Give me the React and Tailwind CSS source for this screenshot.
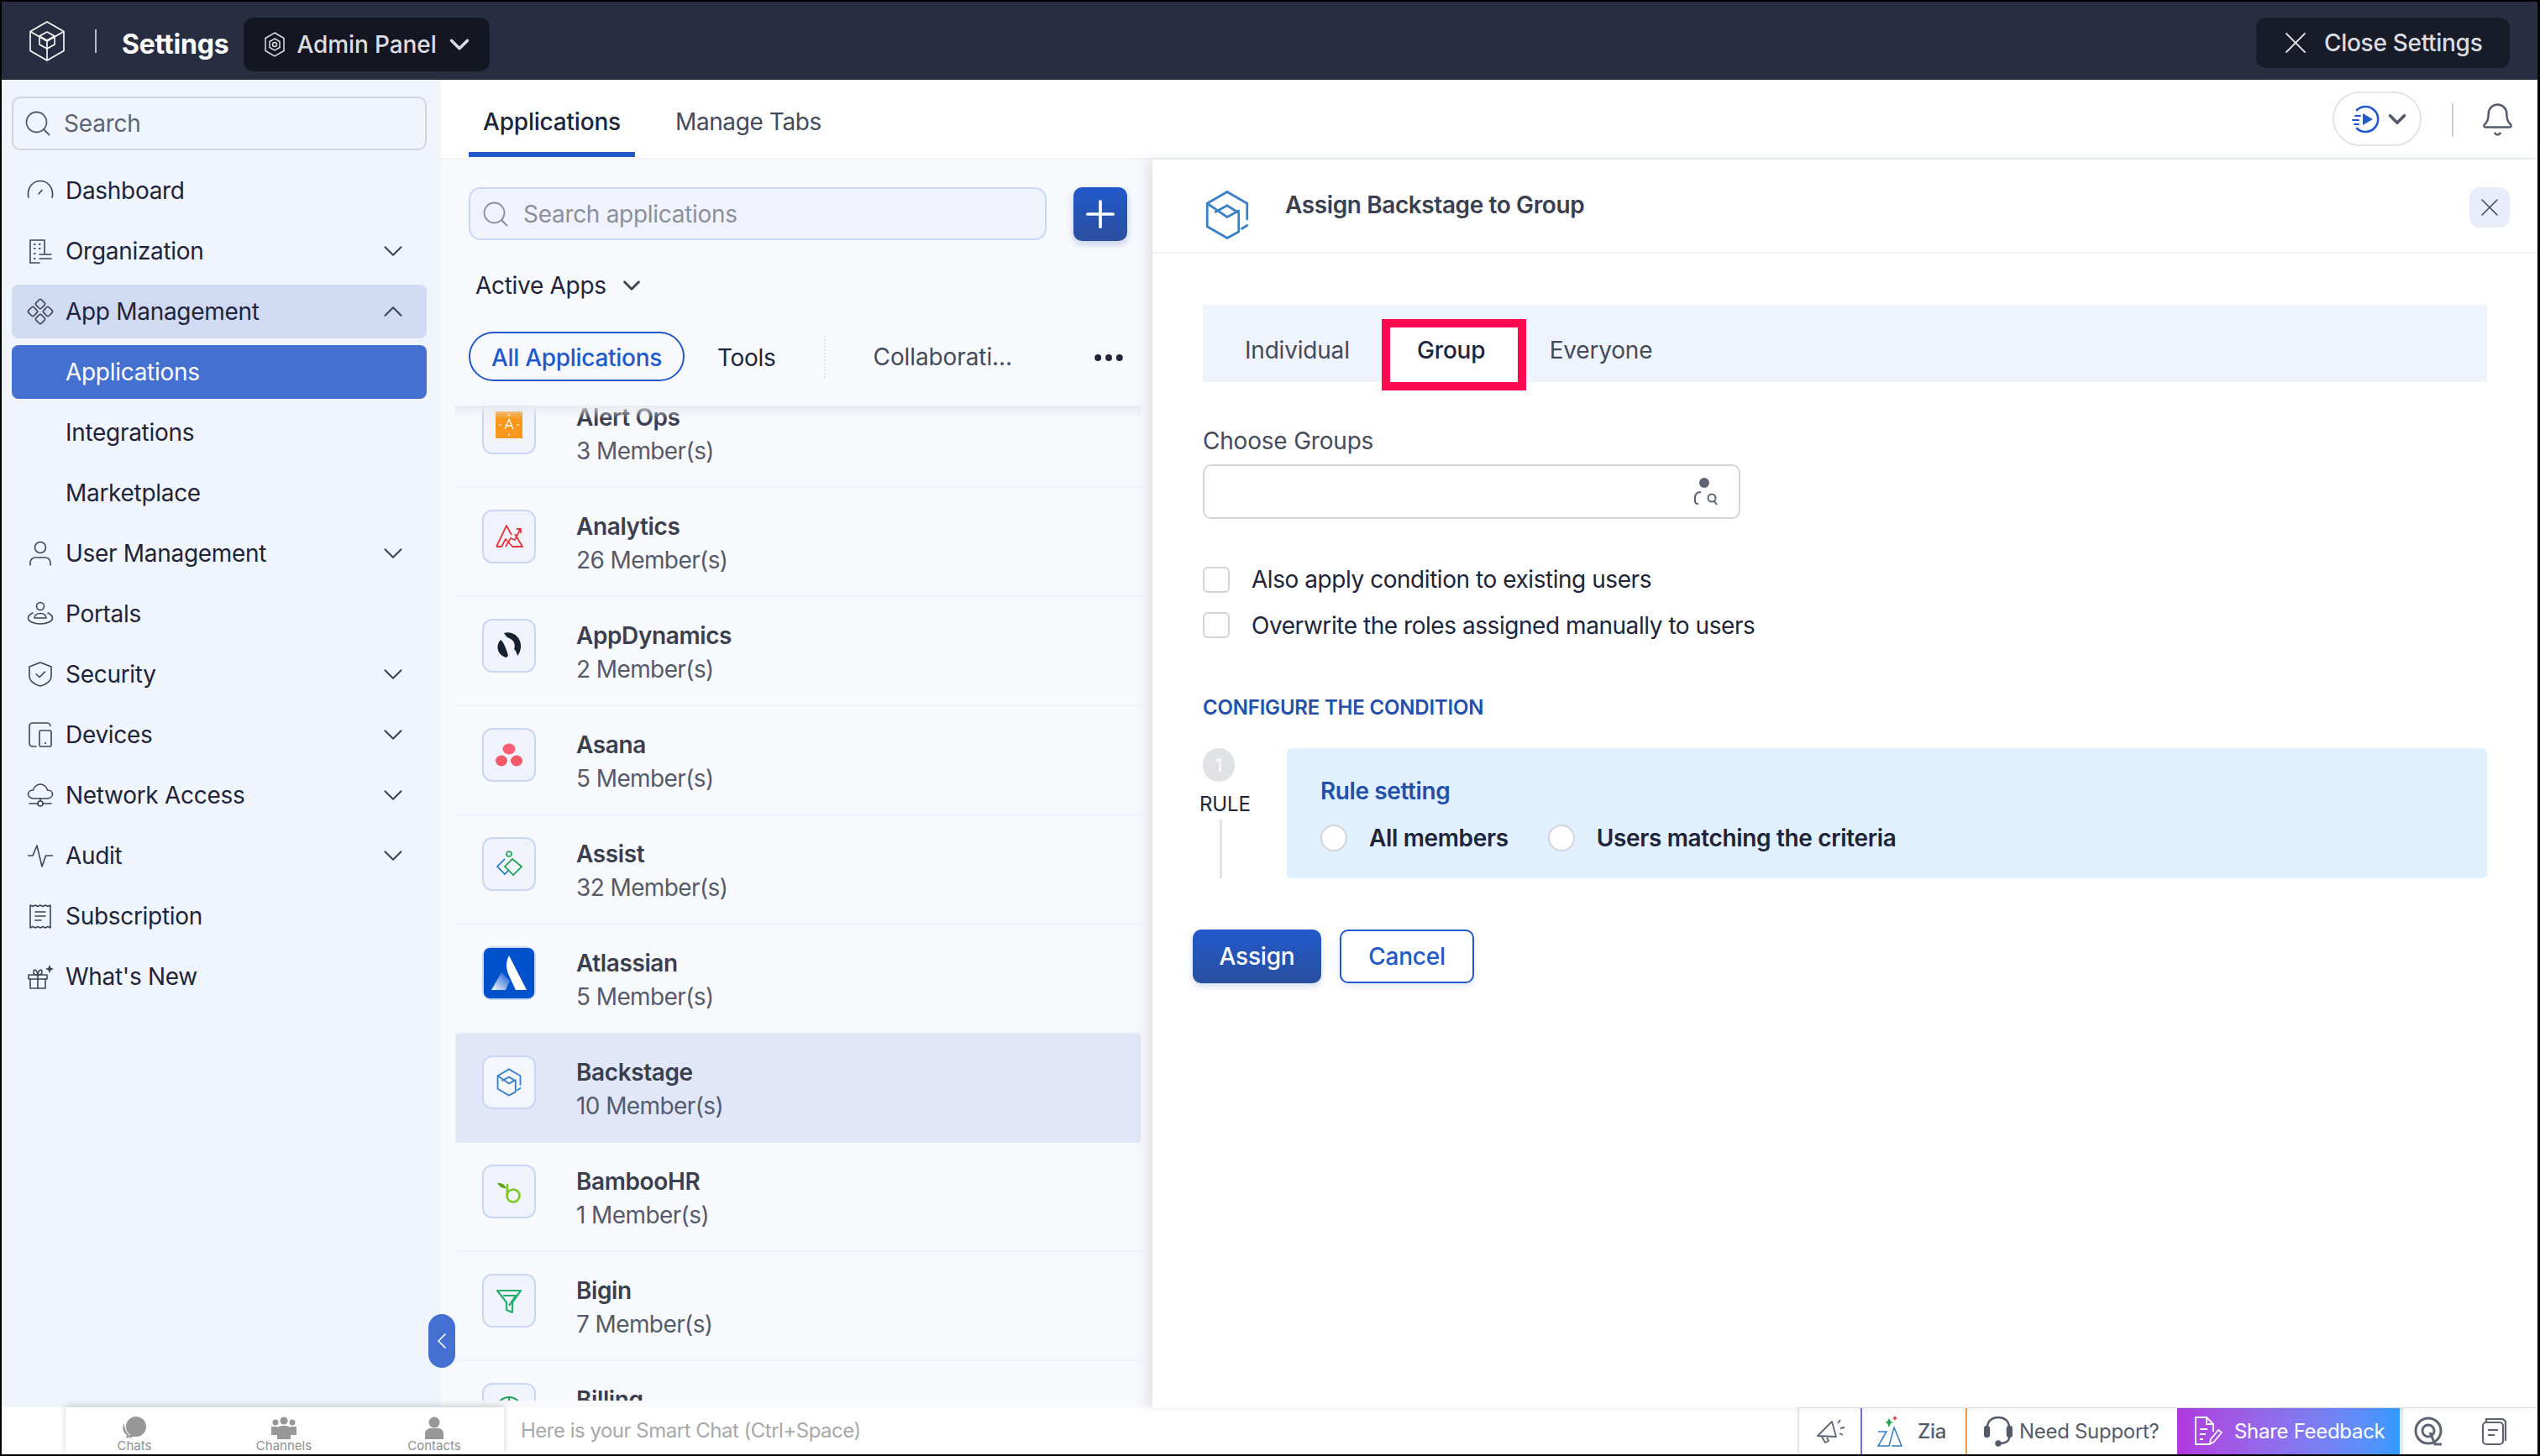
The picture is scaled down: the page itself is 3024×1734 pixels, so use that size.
import React from "react";
import { Search, ChevronDown, ChevronUp, ChevronLeft, X, Plus, Bell, MoreHorizontal } from "lucide-react";

const stroke = { fill: "none", stroke: "currentColor", strokeWidth: 1.6, strokeLinecap: "round", strokeLinejoin: "round" };

function Ico({ size = 32, vb = 32, className = "", children }) {
  return (
    <svg width={size} height={size} viewBox={`0 0 ${vb} ${vb}`} className={`shrink-0 ${className}`} {...stroke}>
      {children}
    </svg>
  );
}

const navIcons = {
  dash: (
    <Ico>
      <path d="M2 28c-.4-1-.6-2.300-.6-3.500C1.400 15 8 8.500 16 8.500S30.600 15 30.600 24.500c0 1.200-.2 2.500-.6 3.500" transform="translate(0 -4)" />
      <path d="M14 20l4-4.500" />
    </Ico>
  ),
  org: (
    <Ico>
      <path d="M4 30V3h17v16" />
      <path d="M4 30h11" />
      <path d="M9 8h.5M15 8h.5M9 13h.5M15 13h.5M9 19h.5M9 25h.5" strokeWidth="2.200" />
      <path d="M15 20h14M15 25h14" />
    </Ico>
  ),
  app: (
    <Ico>
      <rect x="11.500" y="2.500" width="9" height="9" rx="2" transform="rotate(45 16 7)" />
      <rect x="11.500" y="20.500" width="9" height="9" rx="2" transform="rotate(45 16 25)" />
      <rect x="2.500" y="11.500" width="9" height="9" rx="2" transform="rotate(45 7 16)" />
      <rect x="20.500" y="11.500" width="9" height="9" rx="2" transform="rotate(45 25 16)" />
    </Ico>
  ),
  user: (
    <Ico>
      <circle cx="16" cy="9" r="6.500" />
      <path d="M4 30v-3c0-3.500 3-6 6-6h12c3 0 6 2.500 6 6v3" />
    </Ico>
  ),
  portal: (
    <Ico>
      <circle cx="16" cy="7" r="4.500" />
      <path d="M9 21c0-3.500 3-5.500 7-5.500s7 2 7 5.500z" />
      <path d="M7 15c-3.500 1.500-5.500 3.500-5.500 6 0 4 6.500 7 14.500 7s14.500-3 14.500-7c0-2.500-2-4.500-5.500-6" />
    </Ico>
  ),
  shield: (
    <Ico>
      <path d="M16 2l13 5v11c0 6-6 10.500-13 12C9 28.500 3 24 3 18V7z" />
      <path d="M11 16l4 3.500 6.500-6.500" />
    </Ico>
  ),
  device: (
    <Ico>
      <path d="M11 30H7c-2.500 0-4-1.500-4-4V6c0-2.500 1.500-4 4-4h17c2 0 4 1.500 4 3.500" />
      <rect x="15" y="11" width="14" height="19" rx="1.500" />
      <path d="M22 26h.2" strokeWidth="2" />
    </Ico>
  ),
  network: (
    <Ico>
      <path d="M9 20c-4.500 0-7.500-2-7.500-5s2.500-5 6-5c1-4 4.500-7 8.500-7s7.500 3 8.500 7c3.500 0 6 2 6 5s-3 5-7.500 5z" />
      <path d="M3 26h10M19 26h10M16 20v3" />
      <circle cx="16" cy="26" r="3" />
    </Ico>
  ),
  audit: (
    <Ico>
      <path d="M1.500 16H7l5-12 6 25 4.500-13h8" />
    </Ico>
  ),
  sub: (
    <Ico>
      <path d="M4 3l3 1.500L10 3l3 1.500L16 3l3 1.500L22 3l3 1.500L28 3v27l-3-1.500L22 30l-3-1.500L16 30l-3-1.500L10 30l-3-1.500L4 30z" />
      <path d="M10 11h12M10 16h12M10 21h7" />
    </Ico>
  ),
  gift: (
    <Ico>
      <rect x="2" y="14" width="22" height="5" />
      <path d="M4 19v11h18V19M13 14v16M8 10c0-3 4-3 5 4-5 0-5-2-5-4zM18 10c0-3-4-3-5 4 5 0 5-2 5-4z" />
      <path d="M27 2l1.500 3.500L32 7l-3.500 1.500L27 12l-1.500-3.500L22 7l3.500-1.500z" fill="currentColor" stroke="none" />
    </Ico>
  ),
};

const navItems = [
  { name: "Dashboard", icon: "dash" },
  { name: "Organization", icon: "org", chev: "down" },
  { name: "App Management", icon: "app", chev: "up", open: true },
  { name: "Applications", active: true },
  { name: "Integrations" },
  { name: "Marketplace" },
  { name: "User Management", icon: "user", chev: "down" },
  { name: "Portals", icon: "portal" },
  { name: "Security", icon: "shield", chev: "down" },
  { name: "Devices", icon: "device", chev: "down" },
  { name: "Network Access", icon: "network", chev: "down" },
  { name: "Audit", icon: "audit", chev: "down" },
  { name: "Subscription", icon: "sub" },
  { name: "What's New", icon: "gift" },
];

function Hex({ size, className, width = 2 }) {
  return (
    <svg width={size} height={size} viewBox="0 0 48 48" className={`shrink-0 ${className}`} fill="none" stroke="currentColor" strokeWidth={width} strokeLinejoin="round" strokeLinecap="round">
      <path d="M24 2l19 11v15M38 37l5-3" />
      <path d="M24 2L5 13v22l19 11 11-6V22L24 15l-11 6" />
      <path d="M5 13l19 13 11-6" />
    </svg>
  );
}

const apps = [
  {
    name: "Alert Ops", members: "3 Member(s)",
    icon: (
      <svg width="32" height="32" viewBox="0 0 32 32" className="-mt-[6px]">
        <rect width="32" height="32" fill="#f7981d" />
        <path d="M16 9l-5 12M16 9l5 12M13 17h6" stroke="#fff" strokeWidth="1.300" fill="none" />
        <path d="M16 3v3M16 26v3M4 16h3M25 16h3" stroke="#fff" strokeWidth="1" />
      </svg>
    ),
  },
  {
    name: "Analytics", members: "26 Member(s)",
    icon: (
      <svg width="34" height="32" viewBox="0 0 34 32" fill="none" stroke="#e8353c" strokeWidth="1.800" strokeLinejoin="round">
        <path d="M2 28L14 3l6 11" />
        <path d="M2 28h6l5-9 8 9H33l-9-15" />
        <path d="M13 28l6-10 5 2 6-12M26 7l5 0 0 5" />
      </svg>
    ),
  },
  {
    name: "AppDynamics", members: "2 Member(s)",
    icon: (
      <svg width="32" height="32" viewBox="0 0 32 32" fill="#17202e">
        <path d="M10 1c9-3 19 3 20 14 .4 5-1 9-4 13-1-4-2-6-4-8 2-5 0-11-6-13-3-1-4-3-6-6z" />
        <path d="M6 9c3 2 6 8 9 19-1 1-2 2-3 2C3 27-1 17 6 9z" />
      </svg>
    ),
  },
  {
    name: "Asana", members: "5 Member(s)",
    icon: (
      <svg width="32" height="30" viewBox="0 0 32 30" fill="#f4596a">
        <ellipse cx="16" cy="8" rx="7.500" ry="6.500" fill="#f95e73" />
        <ellipse cx="7" cy="22" rx="7" ry="6.500" />
        <ellipse cx="25" cy="22" rx="7" ry="6.500" />
      </svg>
    ),
  },
  {
    name: "Assist", members: "32 Member(s)",
    icon: (
      <svg width="32" height="32" viewBox="0 0 32 32" fill="none" strokeWidth="1.700">
        <circle cx="16" cy="4" r="3" stroke="#1aa053" />
        <path d="M11 10L2 19l9 9 5-5" stroke="#1f74c4" />
        <path d="M20 10l11 9-10 10-10-10z" stroke="#1aa053" />
      </svg>
    ),
  },
  {
    name: "Atlassian", members: "5 Member(s)", full: true,
    icon: (
      <svg width="60" height="60" viewBox="0 0 60 60">
        <defs>
          <linearGradient id="atl" x1="1" y1="0" x2="0" y2="1">
            <stop offset="0" stopColor="#0052cc" />
            <stop offset="1" stopColor="#fff" />
          </linearGradient>
        </defs>
        <rect width="60" height="60" rx="7" fill="#0052cc" />
        <path d="M30 9c-4 8-4 15 0 24l8 17h13z" fill="#fff" />
        <path d="M21 29L9 50h17l5-11c-3-3-6-6-10-10z" fill="url(#atl)" />
      </svg>
    ),
  },
  {
    name: "Backstage", members: "10 Member(s)", selected: true,
    icon: <Hex size={34} className="text-[#3a80c4]" width={2.600} />,
  },
  {
    name: "BambooHR", members: "1 Member(s)",
    icon: (
      <svg width="32" height="32" viewBox="0 0 32 32" fill="none" stroke="#79c91f" strokeWidth="2.600">
        <path d="M14 7v14" />
        <circle cx="21" cy="21" r="7.500" />
        <path d="M2 6c4-1 8 1 11 6-4 1-8-1-11-6z" fill="#5fa718" stroke="none" />
      </svg>
    ),
  },
  {
    name: "Bigin", members: "7 Member(s)",
    icon: (
      <svg width="32" height="32" viewBox="0 0 32 32" fill="none" stroke="#27ae6d" strokeWidth="2.200" strokeLinejoin="round">
        <path d="M2 4h28L20 18v12l-7-3v-9z" />
        <path d="M9 10h18M16 22l8-12" />
      </svg>
    ),
  },
  {
    name: "Billing",
    icon: (
      <svg width="34" height="34" viewBox="0 0 34 34" fill="none" stroke="#1aa053" strokeWidth="1.800">
        <circle cx="17" cy="17" r="15" />
        <path d="M17 2v30M6 8c6 3 9 6 11 12M28 8c-6 3-9 6-11 12" />
      </svg>
    ),
  },
];

function AppRow({ app }) {
  return (
    <div className={`flex h-[130px] shrink-0 items-start pl-8 border-b-2 ${app.selected ? "bg-[#e1e7f8] border-[#e1e7f8] rounded-[4px]" : "border-[#f1f3f8]"}`}>
      <div className={`mt-[26px] flex h-16 w-16 items-center justify-center rounded-[12px] border-2 ${app.selected ? "bg-[#f3f6fd] border-[#c9d7f4]" : "bg-[#f0f3fb] border-[#c9d7f4]"}`}>
        {app.icon}
      </div>
      <div className="ml-12 mt-[27px] flex flex-col">
        <span className="text-[28px] leading-[38px] font-semibold tracking-[-0.4px] text-[#3a3f50]">{app.name}</span>
        {app.members && <span className="mt-[1px] text-[28px] leading-[40px] tracking-[-0.6px] text-[#565b6b]">{app.members}</span>}
      </div>
    </div>
  );
}

function Sidebar() {
  return (
    <aside className="relative flex w-[523px] shrink-0 flex-col bg-[#f0f4fc] px-3 pt-5">
      <div className="flex h-16 w-[494px] items-center rounded-[10px] border-2 border-[#d2d4d8] pl-[11px] text-[#565b6b]">
        <Search size={36} strokeWidth={1.200} />
        <span className="ml-[13px] text-[28px] tracking-[-0.2px] text-[#5f6472]">Search</span>
      </div>
      <nav className="mt-4 flex w-[494px] flex-col gap-2">
        {navItems.map((item) => (
          <div
            key={item.name}
            className={`relative flex h-16 items-center rounded-lg pl-[64px] text-[28px] tracking-[-0.3px] ${
              item.active ? "bg-[#4471d1] text-white" : item.open ? "bg-[#d0dbf3] text-[#20243a]" : "text-[#20243a]"
            }`}
          >
            {item.icon && <span className="absolute left-[18px] text-[#3f4452]">{navIcons[item.icon]}</span>}
            <span>{item.name}</span>
            {item.chev === "down" && <ChevronDown size={38} strokeWidth={1.300} className="ml-auto mr-[21px] text-[#3f4452]" />}
            {item.chev === "up" && <ChevronUp size={38} strokeWidth={1.300} className="ml-auto mr-[21px] text-[#3f4452]" />}
          </div>
        ))}
      </nav>
      <button className="absolute bottom-[47px] right-[-17px] z-20 flex h-16 w-8 items-center justify-center rounded-full bg-[#4471d1] text-white">
        <ChevronLeft size={32} strokeWidth={1.300} />
      </button>
    </aside>
  );
}

function AppList() {
  return (
    <div className="flex w-[847px] shrink-0 flex-col bg-[#f8f9fd]">
      <div className="pl-[33px] pt-[33px]">
        <div className="flex items-start">
          <div className="flex h-[63px] w-[688px] items-center rounded-[14px] border-2 border-[#c9d7f4] bg-[#f0f3fb] pl-[12px]">
            <Search size={36} strokeWidth={1.200} className="text-[#8a8e99]" />
            <span className="ml-[15px] text-[28px] tracking-[-0.3px] text-[#8c909c]">Search applications</span>
          </div>
          <button className="ml-8 flex h-16 w-16 items-center justify-center rounded-[10px] bg-gradient-to-b from-[#2159cb] to-[#2a4f9f] text-white shadow-[0_4px_8px_rgba(40,80,160,0.25)]">
            <Plus size={52} strokeWidth={1.700} />
          </button>
        </div>
        <div className="ml-[8px] mt-[33px] flex h-10 items-center text-[28px] tracking-[-0.3px] text-[#20243a]">
          <span>Active Apps</span>
          <ChevronDown size={34} strokeWidth={2} className="ml-[13px] text-[#3f4452]" />
        </div>
        <div className="mt-[35px] flex h-[59px] items-center">
          <span className="flex h-[59px] w-[257px] items-center justify-center rounded-full border-2 border-[#2159cb] pt-[3px] text-[28px] font-medium tracking-[-0.3px] text-[#2159cb]">All Applications</span>
          <span className="ml-[39px] pt-[3px] text-[28px] tracking-[-0.3px] text-[#20243a]">Tools</span>
          <span className="ml-[57px] h-[50px] border-l-2 border-dotted border-[#dfe1e6]" />
          <span className="ml-[57px] text-[28px] tracking-[-0.1px] text-[#454a5a]">Collaborati...</span>
          <MoreHorizontal size={44} strokeWidth={2.300} className="ml-[93px] mt-[3px] text-[#20243a]" />
        </div>
      </div>
      <div className="relative ml-[17px] mr-[14px] mt-[29px] h-[1185px] overflow-hidden">
        <div className="absolute inset-x-0 top-0 z-10 h-4 bg-gradient-to-b from-[#e6e8ed]/80 to-transparent" />
        <div className="-mt-8 flex flex-col">
          {apps.map((app) => <AppRow key={app.name} app={app} />)}
        </div>
      </div>
    </div>
  );
}

function AssignPanel() {
  return (
    <div className="relative flex-1 bg-white shadow-[-8px_0_12px_rgba(60,70,100,0.1)]">
      <div className="relative flex h-[112px] border-b-2 border-[#f1f2f4] pl-[59px]">
        <Hex size={60} className="mt-[36px] text-[#3a80c4]" width={2.200} />
        <span className="ml-[39px] mt-[36px] h-9 text-[28px] leading-9 font-semibold tracking-[-0.4px] text-[#3a3f50]">Assign Backstage to Group</span>
        <button className="absolute right-[33px] top-[33px] flex h-12 w-12 items-center justify-center rounded-xl bg-[#e8edf9] text-[#3f4452]">
          <X size={36} strokeWidth={1} />
        </button>
      </div>
      <div className="px-[60px]">
        <div className="mt-[61px] flex h-[92px] items-start bg-[#eff3fb] pl-[50px] text-[28px] leading-9 tracking-[-0.2px] text-[#454a5a]">
          <span className="mt-9">Individual</span>
          <span className="ml-[38px] mt-[17px] h-[85px] w-[172px] border-[10px] border-[#ff0a50] bg-white pr-[6px] pt-[9px] text-center font-medium text-[#20243a]">Group</span>
          <span className="ml-[28px] mt-9">Everyone</span>
        </div>
        <div className="mt-[52px] text-[28px] leading-9 tracking-[-0.2px] text-[#454a5a]">Choose Groups</div>
        <div className="mt-[10px] flex h-[65px] w-[640px] items-center justify-end rounded-[10px] border-2 border-[#d2d4d8] pr-6">
          <svg width="32" height="34" viewBox="0 0 32 34" fill="none" stroke="#5f6472" strokeWidth="2">
            <ellipse cx="15" cy="6" rx="6" ry="6" fill="#5f6472" stroke="none" />
            <path d="M11 17c-5 0-7 3-7 7v4c0 2 1 3 4 3" />
            <circle cx="24" cy="24" r="4.500" />
            <path d="M27 28l3 4" />
          </svg>
        </div>
        <div className="mt-[57px] flex h-[31px] items-center text-[28px] tracking-[-0.45px] text-[#20243a]">
          <span className="h-[31px] w-8 rounded-md border-2 border-[#d2d4d8] bg-white" />
          <span className="ml-[26px] -translate-y-[1px]">Also apply condition to existing users</span>
        </div>
        <div className="mt-[23px] flex h-[31px] items-center text-[28px] tracking-[-0.45px] text-[#20243a]">
          <span className="h-[31px] w-8 rounded-md border-2 border-[#d2d4d8] bg-white" />
          <span className="ml-[26px]">Overwrite the roles assigned manually to users</span>
        </div>
        <div className="mt-[67px] h-8 text-[24px] leading-8 font-semibold tracking-[-0.2px] text-[#2350a8]">CONFIGURE THE CONDITION</div>
        <div className="mt-[32px] flex h-[155px]">
          <div className="flex w-[100px] shrink-0 flex-col">
            <span className="flex h-10 w-[38px] items-center justify-center rounded-full bg-[#e0e2e6] text-[22px] text-white">1</span>
            <span className="-ml-1 mt-[11px] text-[24px] leading-8 tracking-[-0.1px] text-[#20243a]">RULE</span>
            <span className="ml-5 mt-[2px] h-[70px] w-[3px] bg-[#dfe1e6]" />
          </div>
          <div className="flex-1 rounded-md bg-[#e1f0fe] pl-10">
            <div className="mt-[33px] text-[28px] leading-9 font-semibold tracking-[-0.4px] text-[#2350a8]">Rule setting</div>
            <div className="mt-[22px] flex h-8 items-center text-[28px] font-semibold tracking-[-0.35px] text-[#20243a]">
              <span className="h-8 w-8 rounded-full border-2 border-[#d2d4d8] bg-white" />
              <span className="ml-[26px]">All members</span>
              <span className="ml-[47px] h-8 w-8 rounded-full border-2 border-[#d2d4d8] bg-white" />
              <span className="ml-[26px]">Users matching the criteria</span>
            </div>
          </div>
        </div>
        <div className="-ml-3 mt-[61px] flex gap-[22px] text-[28px] font-medium tracking-[-0.2px]">
          <button className="h-16 w-[153px] rounded-[10px] bg-gradient-to-b from-[#2159cb] to-[#2a4f9f] text-white shadow-[0_4px_8px_rgba(40,80,160,0.2)]">Assign</button>
          <button className="h-16 w-[160px] rounded-[10px] border-2 border-[#2159cb] bg-white text-[#2159cb] shadow-[0_4px_8px_rgba(40,80,160,0.12)]">Cancel</button>
        </div>
      </div>
    </div>
  );
}

function BottomTab({ label, width, children }) {
  return (
    <div className={`flex flex-col items-center pt-[11px] text-[#8f8f8f] ${width}`}>
      {children}
      <span className="-mt-[1px] text-[15px] leading-[18px]">{label}</span>
    </div>
  );
}

function BottomBar() {
  return (
    <div className="flex h-14 shrink-0 items-stretch bg-white font-['Inter']">
      <div className="z-10 ml-[76px] flex w-[522px] shrink-0 shadow-[0_-2px_8px_rgba(0,0,0,0.18)]">
        <BottomTab label="Chats" width="w-[164px]">
          <svg width="30" height="27" viewBox="0 0 30 27" fill="#979797">
            <ellipse cx="17" cy="12" rx="12" ry="12" />
            <path d="M3 8c-3 5-2 11 3 14l-1 4 5-2 3 1C7 22 3 16 3 8z" />
            <path d="M10 21l-1 5 7-3z" />
          </svg>
        </BottomTab>
        <BottomTab label="Channels" width="w-[192px]">
          <svg width="30" height="27" viewBox="0 0 30 27" fill="#979797">
            <circle cx="5" cy="7" r="3.500" /><circle cx="25" cy="7" r="3.500" /><circle cx="15" cy="5" r="4.500" />
            <path d="M0 12h7v10H0zM23 12h7v10h-7z" />
            <path d="M7 14c0-2 3-3 8-3s8 1 8 3v13H7z" />
          </svg>
        </BottomTab>
        <BottomTab label="Contacts" width="w-[166px]">
          <svg width="26" height="27" viewBox="0 0 26 27" fill="#979797">
            <circle cx="13" cy="7" r="6.500" />
            <path d="M2 27v-7c0-3 3-6 6-6h10c3 0 6 3 6 6v7z" />
          </svg>
        </BottomTab>
      </div>
      <div className="flex-1 pl-[20px] text-[24px] leading-[56px] tracking-[-0.5px] text-[#a8a8a8]">Here is your Smart Chat (Ctrl+Space)</div>
      <div className="flex w-[881px] shrink-0 border-t border-[#e4e4e4] text-[24px] tracking-[-0.3px] text-[#565b6b]">
        <div className="flex w-[75px] items-center justify-center border-l-2 border-[#e8e8e8]">
          <svg width="36" height="36" viewBox="0 0 36 36" fill="none" stroke="#5f6472" strokeWidth="1.800" strokeLinejoin="round">
            <path d="M3 23L20 6l5 18z" />
            <path d="M8 24l4 7 4-2-2-4M27 8l3-4M30 14l5-1M29 20l4 2" />
          </svg>
        </div>
        <div className="flex w-[125px] items-center gap-4 border-l-2 border-[#6b6bee] pl-[18px]">
          <svg width="32" height="40" viewBox="0 0 32 40" fill="none" stroke="#2f7ac2" strokeWidth="1.500">
            <path d="M1 20h10L1 37h13l6-22 9 22H17" />
            <path d="M14 4l2 4 3 1-3 1-2 5-2-5-3-1 3-1z" fill="#1fa34a" stroke="none" />
            <path d="M21 1l1 2 2 1-2 1-1 2-1-2-2-1 2-1z" fill="#e53935" stroke="none" />
          </svg>
          <span className="font-medium">Zia</span>
        </div>
        <div className="flex w-[252px] items-center gap-[8px] border-l-2 border-[#f29a38] pl-5">
          <svg width="34" height="38" viewBox="0 0 34 38" fill="none" stroke="#565b6b" strokeWidth="2.400">
            <path d="M4 14C4 6 10 2 17 2s13 4 13 12v12c0 4-4 7-11 7" />
            <rect x="1" y="13" width="5" height="12" rx="2.500" fill="#565b6b" />
            <rect x="28" y="13" width="5" height="12" rx="2.500" fill="#565b6b" />
            <circle cx="17" cy="33" r="2.500" fill="#565b6b" />
          </svg>
          <span>Need Support?</span>
        </div>
        <div className="flex w-[265px] items-center gap-[14px] bg-gradient-to-r from-[#b138df] to-[#2f9bff] pl-5 text-white">
          <svg width="34" height="38" viewBox="0 0 34 38" fill="none" stroke="#fff" strokeWidth="1.800" strokeLinejoin="round">
            <path d="M19 34H2V2h13l8 8v9M15 2v8h8M7 16h9M7 22h7M7 28h4" />
            <path d="M19 34l1-6 9-11 4 3-9 11z" />
          </svg>
          <span>Share Feedback</span>
        </div>
        <div className="flex w-[66px] items-center justify-center border-l-4 border-[#e8e8e8]">
          <svg width="36" height="36" viewBox="0 0 36 36" fill="none" stroke="#5f6472" strokeWidth="3">
            <circle cx="17" cy="17" r="15" />
            <circle cx="17" cy="17" r="7" />
            <path d="M19 19l6 14h8" />
          </svg>
        </div>
        <div className="flex w-[92px] items-center justify-center">
          <svg width="32" height="34" viewBox="0 0 32 34" fill="none" stroke="#5f6472" strokeWidth="2.200">
            <path d="M7 5V2h20l3 3v23" />
            <rect x="3" y="6" width="24" height="26" rx="4" />
            <path d="M9 15h12M9 21h8" />
          </svg>
        </div>
      </div>
    </div>
  );
}

export default function App() {
  return (
    <div className="flex h-[1734px] w-[3024px] flex-col overflow-hidden bg-black pb-[2px] pl-[2px] pr-[3px] pt-[2px] font-['Inter',sans-serif]">
      <header className="flex h-[93px] shrink-0 items-center bg-[#282d42] pl-[33px] pr-[33px] pt-[9px]">
        <svg width="42" height="48" viewBox="0 0 42 48" fill="none" stroke="#fff" strokeWidth="1.600" strokeLinejoin="round" className="-mt-[9px] shrink-0">
          <path d="M21 1l20 11.500v23L21 47 1 35.500v-23z" />
          <path d="M1 12.500L21 24l20-11.500M21 24v23" />
          <path d="M21 13l9 5v10l-9 5-9-5V18z" />
          <path d="M12 18l9 5 9-5" />
        </svg>
        <span className="ml-9 h-7 w-[2px] -translate-y-1 bg-[#b8bcc8]" />
        <span className="ml-[30px] text-[32px] font-bold tracking-[-0.2px] text-white">Settings</span>
        <div className="ml-[18px] flex h-16 w-[293px] items-center rounded-[12px] bg-[#141722] pl-6 text-[#dcdde2]">
          <svg width="26" height="30" viewBox="0 0 26 30" fill="none" stroke="currentColor" strokeWidth="1.500" className="shrink-0">
            <path d="M13 1l11 6.500v15L13 29 2 22.500v-15z" />
            <path d="M13 8l6 3.500v7L13 22l-6-3.500v-7z" />
            <circle cx="13" cy="15" r="2.500" />
          </svg>
          <span className="ml-[13px] text-[28px] font-medium tracking-[-0.1px]">Admin Panel</span>
          <ChevronDown size={38} strokeWidth={2.200} className="ml-[8px]" />
        </div>
        <div className="-mt-[4px] ml-auto flex h-[60px] w-[302px] items-center rounded-[12px] bg-[#181c28] pl-[25px] text-[#dcdde2]">
          <X size={44} strokeWidth={1} />
          <span className="ml-3 text-[28px] font-medium tracking-[-0.3px]">Close Settings</span>
        </div>
      </header>
      <div className="flex min-h-0 flex-1">
        <Sidebar />
        <main className="flex min-w-0 flex-1 flex-col bg-white">
          <div className="flex h-[95px] shrink-0 border-b-2 border-[#f1f2f4]">
            <div className="ml-[33px] h-[92px] w-[198px] border-b-[6px] border-[#2159cb] pt-[32px] text-center text-[28px] leading-9 font-medium tracking-[-0.2px] text-[#20243a]">Applications</div>
            <div className="ml-12 pt-[32px] text-[28px] leading-9 tracking-[-0.4px] text-[#454a5a]">Manage Tabs</div>
            <div className="ml-auto mr-[26px] flex items-start pt-[14px]">
              <div className="flex h-[65px] w-[106px] items-center gap-[4px] rounded-full border-2 border-[#e4e4e4] pl-[20px]">
                <svg width="34" height="34" viewBox="0 0 34 34" fill="none" stroke="#2159cb" strokeWidth="2.600" strokeLinecap="round" className="shrink-0">
                  <path d="M7 6a15 15 0 1 1 0 22" />
                  <path d="M14 10l12 7-12 7z" fill="#2159cb" stroke="none" />
                  <path d="M5 13h6M2 18h7M4 23h5" strokeWidth="2" />
                </svg>
                <ChevronDown size={34} strokeWidth={2.600} className="text-[#565b6b]" />
              </div>
              <span className="ml-9 mt-[14px] h-10 w-[2px] bg-[#cfd0d4]" />
              <Bell size={43} strokeWidth={1.400} className="ml-[31px] mt-3 text-[#565b6b]" />
            </div>
          </div>
          <div className="flex min-h-0 flex-1">
            <AppList />
            <AssignPanel />
          </div>
        </main>
      </div>
      <BottomBar />
    </div>
  );
}
